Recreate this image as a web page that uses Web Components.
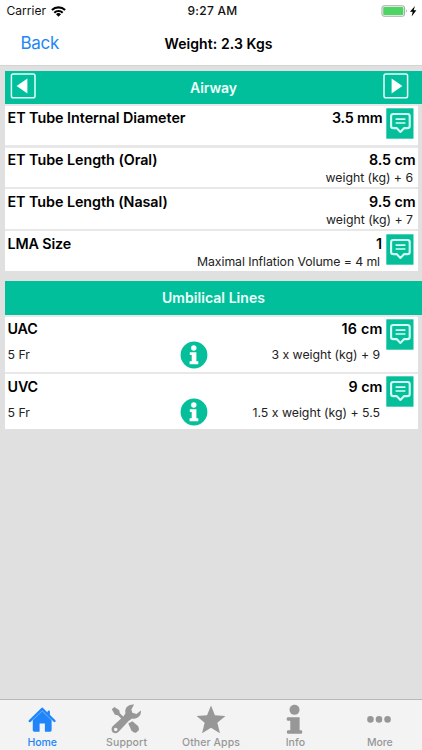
<!DOCTYPE html>
<html lang="en">
<head>
<meta charset="utf-8">
<title>Weight: 2.3 Kgs</title>
<style>
html,body{margin:0;height:100%}
body{font-family:Inter,"Liberation Sans",sans-serif;background:#e0e0e0;color:#111;overflow:hidden}
</style>
</head>
<body>
<dose-app></dose-app>
<script>
const define = (name, html, setup) => customElements.define(name, class extends HTMLElement {
  connectedCallback() {
    if (this.shadowRoot) return;
    const t = document.createElement('template');
    t.innerHTML = typeof html === 'function' ? html(this) : html;
    this.attachShadow({mode:'open'}).append(t.content.cloneNode(true));
    if (setup) setup(this);
  }
});

// Text whose tracking is adjusted so that it spans the width in its "w" attribute.
define('fit-text', `<style>:host{display:inline-block;white-space:nowrap;flex:none}</style><slot></slot>`, el => {
  const w = +el.getAttribute('w');
  const n = el.textContent.length;
  const now = el.getBoundingClientRect().width;
  const s = (w - now) / n;
  el.style.letterSpacing = s.toFixed(4) + 'px';
});

define('note-icon', `<style>:host{display:block;width:28px;height:31px}svg{display:block}</style>
<svg width="28" height="31" viewBox="0 0 28 31"><path fill="#05bf9b" d="M.3.3h27.2v30.4H.3z"/>
<path d="M7.3 6h14.2q2.2 0 2.2 2.2v9.7q0 2.2-2.2 2.2h-3.3l-3.8 3.8-3.8-3.8H7.3q-2.2 0-2.2-2.2V8.2q0-2.200 2.200-2.200z" fill="none" stroke="#d4fff5" stroke-width="2.1" stroke-linejoin="round"/>
<path d="M9.600 11.200h9.800M9.600 15h9.800" stroke="#d4fff5" stroke-width="1.700"/></svg>`);

define('info-icon', `<style>:host{display:block;width:28px;height:28px}svg{display:block}</style>
<svg width="28" height="28" viewBox="0 0 28 28"><circle cx="14" cy="14" r="13.4" fill="#05bf9b"/>
<circle cx="13.8" cy="7" r="2.7" fill="#fff"/><path fill="#fff" d="M9.8 11.2h6.600v9h1.900v3H9.600v-3h2.100v-6.100H9.800z"/></svg>`);

define('arrow-button', el => `<style>:host{display:block;width:26px;height:26px}svg{display:block}</style>
<svg width="26" height="26" viewBox="0 0 26 26"><g ${el.hasAttribute('back') ? 'transform="matrix(-1 0 0 1 26 0)"' : ''}>
<rect x="1" y="1" width="23.6" height="23.8" rx="1.8" fill="none" stroke="#e6fff9" stroke-width="1.5"/><path fill="#fff" d="M8.6 5.6v14.8L19.4 13z"/></g></svg>`);

define('status-bar', `<style>:host{display:flex;height:22px;align-items:center;font-size:12px;line-height:22px}
.l{padding-left:6.5px;width:181px;display:flex;align-items:center;gap:5px}.t{font-weight:500;flex:1}.b{padding-right:4px}svg{display:block}</style>
<div class="l"><fit-text w="39.5">Carrier</fit-text><svg width="15" height="11" viewBox="0 0 15 11"><g fill="none" stroke="#000" stroke-width="2.1"><path d="M.9 4.1a9.4 9.4 0 0 1 13.2 0M3.3 6.7a6 6 0 0 1 8.4 0"/></g><path d="M5 8.3a3.6 3.6 0 0 1 5 0L7.500 10.8z"/></svg></div>
<div class="t"><fit-text w="50">9:27 AM</fit-text></div>
<svg class="b" width="37" height="12" viewBox="0 0 37 12"><rect x="1" y=".8" width="22.6" height="10.4" rx="2" fill="#fff" stroke="#a2a2a2"/><rect x="2.2" y="2" width="20.2" height="8" rx=".8" fill="#4cd562"/><path d="M25.2 4.2q1.6 1.8 0 3.6z" fill="#999"/><path d="M34 .9 28.900 6.700h2.800l-1.100 4.700 4.800-6.100h-2.800z"/></svg>`);

define('nav-bar', `<style>:host{display:grid;grid-template-columns:1fr auto 1fr;height:42px;align-items:center}
.b{color:#2187f6;font-size:17px;padding-left:20.5px}.t{font-size:14px;font-weight:600;padding-left:15px;color:#000}</style>
<div class="b"><fit-text w="38.5">Back</fit-text></div><div class="t"><fit-text w="108">Weight: 2.3 Kgs</fit-text></div><div></div>`);

define('section-head', `<style>:host{display:grid;grid-template-columns:1fr auto 1fr;height:33.5px;margin-left:5px;background:#02bf9c;color:#effffa;font-size:14px;font-weight:600;line-height:33px}
.l{padding:2.5px 0 0 5px}.r{padding:2.5px 13px 0 0;justify-self:end}</style>
<div class="l"><slot name="left"></slot></div><slot></slot><div class="r"><slot name="right"></slot></div>`);

define('dose-row', el => {
  const a = n => el.getAttribute(n), big = el.hasAttribute('big'), note = el.hasAttribute('note');
  return `<style>:host{display:flex;box-sizing:border-box;height:${big ? 55.4 : 39.8}px;margin:0 4.5px 0 5px;padding-left:2.5px;background:#fff}
.c{flex:1;padding-top:2.8px;min-width:0;position:relative}.line{display:flex;justify-content:space-between}
.top{height:20px;line-height:20px;font-size:14.3px;font-weight:600;color:#000}
.sub{height:16px;line-height:16px;font-size:12.3px;margin-top:${big ? 7.9 : -.2}px;padding-right:2.5px;color:#222}
.n{padding:2.4px 4px 0 3px}.n.none{padding:0 2px 0 0}
.info{position:absolute;left:172px;top:24.3px}</style>
<div class="c"><div class="line top"><fit-text w="${a('lw')}">${a('label')}</fit-text><fit-text w="${a('vw')}">${a('value')}</fit-text></div>
<div class="line sub"><span>${big ? '<fit-text w="22.5">5 Fr</fit-text>' : ''}</span>${a('sub') ? `<fit-text w="${a('sw')}">${a('sub')}</fit-text>` : ''}</div>
${big ? '<info-icon class="info"></info-icon>' : ''}</div>
<div class="n ${note ? '' : 'none'}">${note ? '<note-icon></note-icon>' : ''}</div>`;
});

const icons = {
  home:'<path d="M18.200 6.500 28 16v11.400q0 1.400-1.400 1.400H21v-8.400h-5.500v8.400H9.800q-1.400 0-1.400-1.400V16z"/><path d="M25 8v5M5.200 17.700 18.200 5 31 17.700" fill="none" stroke="currentColor" stroke-width="2.500" stroke-linecap="round" stroke-linejoin="round"/><path d="M7 18 18.200 7.300 29.300 18" fill="none" stroke="#b4d7fb" stroke-width=".5"/>',
  tools:'<path d="M3.2 5.5 6 3l5 3.4.6 3.2 5.6 5.6-2 2-5.7-5.5-3-.5z"/><path d="m20.400 20.400 4.200-2.500 5 4.1q2.800 2.800 1.400 5.600l-2.200 2.1q-2.600.8-5.300-2.500z"/><path fill-rule="evenodd" d="M26.400.6q-5-.7-7.600 2.600-2.300 2.800-1.300 6.400L15.300 13 4.600 22.700q-3 3-.5 6.600 3 2.500 6.200-.4l10.700-11.500 3.400-2.400q3.400 1 6.600-1.500 3.200-2.800 2.400-6.800l-4.500 3.600-4.300-1.200-1-3.500zM7.300 24.600a1.900 1.900 0 1 1 0 3.800 1.900 1.900 0 0 1 0-3.800z"/>',
  star:'<path d="M18 1.500 22.100 11.600l10.900.8-8.400 7 2.700 11.100-9.300-5.900-9.300 5.900 2.700-11.100-8.400-7 10.900-.8z"/>',
  info:'<circle cx="17.500" cy="6.1" r="5.2"/><path d="M10.500 13.900h12.300v13.500h1.600q1.200 0 1.200 1.700t-1.200 1.900H10.700q-1.200 0-1.200-1.900t1.200-1.700h2.400v-10.100h-2.600q-1.200 0-1.200-1.700t1.200-1.700z"/>',
  more:'<circle cx="9.1" cy="16" r="3.4"/><circle cx="18" cy="16" r="3.4"/><circle cx="26.900" cy="16" r="3.4"/>'
};

define('tab-item', el => `<style>:host{display:flex;flex-direction:column;align-items:center;flex:1;color:${el.hasAttribute('active') ? '#2085fb' : '#979797'};font-size:10.5px;font-weight:500}
svg{display:block;margin:3.5px 1px 0 0}.t{line-height:14px;margin-top:-.2px}</style>
<svg width="36" height="34" viewBox="0 0 36 34" fill="currentColor">${icons[el.getAttribute('icon')]}</svg><div class="t"><fit-text w="${el.getAttribute('w')}">${el.getAttribute('label')}</fit-text></div>`);

define('tab-bar', `<style>:host{display:flex;background:#f3f3f3;border-top:1px solid #b9b9b9;box-sizing:border-box;height:51px}</style>
<tab-item icon="home" active label="Home" w="29.5"></tab-item><tab-item icon="tools" label="Support" w="41"></tab-item><tab-item icon="star" label="Other Apps" w="58"></tab-item><tab-item icon="info" label="Info" w="19.5"></tab-item><tab-item icon="more" label="More" w="25.5"></tab-item>`);

define('dose-app', `<style>:host{display:flex;flex-direction:column;height:750px;width:422px;background:#e0e0e0}
header{background:#fff;height:65px;border-bottom:1.5px solid #d4d4d4;box-sizing:content-box}
main{flex:1}.a{padding-top:4.6px}.b{padding-top:10.3px}.rows{display:grid;gap:2.1px;padding-top:1.6px;background:linear-gradient(#e8e8e8,#e8e8e8) 5px 0/412.5px 100% no-repeat}</style>
<header><status-bar></status-bar><nav-bar></nav-bar></header>
<main><div class="a"><section-head><arrow-button slot="left" back></arrow-button><fit-text w="47">Airway</fit-text><arrow-button slot="right"></arrow-button></section-head>
<div class="rows">
<dose-row label="ET Tube Internal Diameter" lw="178" value="3.5 mm" vw="50.5" note></dose-row>
<dose-row label="ET Tube Length (Oral)" lw="150" value="8.5 cm" vw="46.5" sub="weight (kg) + 6" sw="87.5"></dose-row>
<dose-row label="ET Tube Length (Nasal)" lw="160" value="9.5 cm" vw="46.5" sub="weight (kg) + 7" sw="87"></dose-row>
<dose-row label="LMA Size" lw="63.5" value="1" vw="6.5" sub="Maximal Inflation Volume = 4 ml" sw="183" note></dose-row></div></div>
<div class="b"><section-head><fit-text w="103">Umbilical Lines</fit-text></section-head>
<div class="rows">
<dose-row big label="UAC" lw="30" value="16 cm" vw="41" sub="3 x weight (kg) + 9" sw="108.5" note></dose-row>
<dose-row big label="UVC" lw="30.5" value="9 cm" vw="34" sub="1.5 x weight (kg) + 5.5" sw="127.5" note></dose-row></div></div></main>
<tab-bar></tab-bar>`);
</script>
</body>
</html>
